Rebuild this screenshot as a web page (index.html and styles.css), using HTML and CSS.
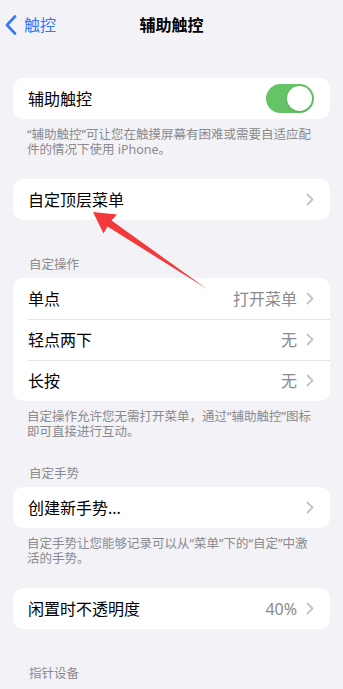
FILE: index.html
```html
<!DOCTYPE html>
<html lang="zh-CN">
<head>
<meta charset="utf-8">
<title>辅助触控</title>
<link rel="stylesheet" href="styles.css">
</head>
<body>
<div class="page">
  <header class="nav">
    <div class="back">
      <svg class="back-icon" width="12" height="20" viewBox="0 0 12 20"><path d="M10 1.5 L2 10 L10 18.5" fill="none" stroke="#3478f6" stroke-width="2.6" stroke-linecap="round" stroke-linejoin="round"/></svg>
      <span>触控</span>
    </div>
    <div class="title">辅助触控</div>
  </header>

  <section class="card first">
    <div class="row">
      <span class="label">辅助触控</span>
      <span class="toggle"><span class="knob"></span></span>
    </div>
  </section>
  <p class="caption">“辅助触控”可让您在触摸屏幕有困难或需要自适应配<br>件的情况下使用 iPhone。</p>

  <section class="card after-caption">
    <div class="row">
      <span class="label">自定顶层菜单</span>
      <span class="right"><svg class="chev" width="8" height="13" viewBox="0 0 8 13"><path d="M1.5 1.5 L6.5 6.5 L1.5 11.5" fill="none" stroke="#c4c4c8" stroke-width="1.8" stroke-linecap="round" stroke-linejoin="round"/></svg></span>
    </div>
  </section>

  <h2 class="header after-card">自定操作</h2>
  <section class="card">
    <div class="row">
      <span class="label">单点</span>
      <span class="right"><span class="value">打开菜单</span><svg class="chev" width="8" height="13" viewBox="0 0 8 13"><path d="M1.5 1.5 L6.5 6.5 L1.5 11.5" fill="none" stroke="#c4c4c8" stroke-width="1.8" stroke-linecap="round" stroke-linejoin="round"/></svg></span>
    </div>
    <div class="row sep">
      <span class="label">轻点两下</span>
      <span class="right"><span class="value">无</span><svg class="chev" width="8" height="13" viewBox="0 0 8 13"><path d="M1.5 1.5 L6.5 6.5 L1.5 11.5" fill="none" stroke="#c4c4c8" stroke-width="1.8" stroke-linecap="round" stroke-linejoin="round"/></svg></span>
    </div>
    <div class="row sep">
      <span class="label">长按</span>
      <span class="right"><span class="value">无</span><svg class="chev" width="8" height="13" viewBox="0 0 8 13"><path d="M1.5 1.5 L6.5 6.5 L1.5 11.5" fill="none" stroke="#c4c4c8" stroke-width="1.8" stroke-linecap="round" stroke-linejoin="round"/></svg></span>
    </div>
  </section>
  <p class="caption">自定操作允许您无需打开菜单，通过“辅助触控”图标<br>即可直接进行互动。</p>

  <h2 class="header after-caption-h">自定手势</h2>
  <section class="card">
    <div class="row">
      <span class="label">创建新手势...</span>
      <span class="right"><svg class="chev" width="8" height="13" viewBox="0 0 8 13"><path d="M1.5 1.5 L6.5 6.5 L1.5 11.5" fill="none" stroke="#c4c4c8" stroke-width="1.8" stroke-linecap="round" stroke-linejoin="round"/></svg></span>
    </div>
  </section>
  <p class="caption">自定手势让您能够记录可以从“菜单”下的“自定”中激<br>活的手势。</p>

  <section class="card after-caption">
    <div class="row">
      <span class="label">闲置时不透明度</span>
      <span class="right"><span class="value">40%</span><svg class="chev" width="8" height="13" viewBox="0 0 8 13"><path d="M1.5 1.5 L6.5 6.5 L1.5 11.5" fill="none" stroke="#c4c4c8" stroke-width="1.8" stroke-linecap="round" stroke-linejoin="round"/></svg></span>
    </div>
  </section>

  <h2 class="header after-card">指针设备</h2>

  <svg class="arrow" width="343" height="689" viewBox="0 0 343 689">
    <polygon points="93,212 117,214.5 111.5,220.5 207,289 107.5,226.5 103.5,233.5" fill="#f23a3a"/>
  </svg>
</div>
</body>
</html>
```

FILE: styles.css
```css
* { box-sizing: border-box; }

html, body {
  margin: 0;
  padding: 0;
  background: #f2f2f7;
}

body {
  font-family: "Noto Sans", "Noto Sans CJK SC", sans-serif;
  color: #000;
  width: 343px;
  height: 689px;
  overflow: hidden;
}

.page {
  position: relative;
  display: flex;
  flex-direction: column;
  padding: 0 13px;
  height: 689px;
}

.page > * { flex-shrink: 0; }

.nav {
  position: relative;
  height: 50px;
  display: flex;
  align-items: center;
  justify-content: center;
  margin: 0 -13px;
}

.back {
  position: absolute;
  left: 5px;
  top: 15px;
  display: flex;
  align-items: center;
  gap: 7px;
  color: #3478f6;
  font-size: 16px;
  line-height: 20px;
}

.back-icon { display: block; }

.title {
  font-size: 16px;
  font-weight: 700;
  line-height: 20px;
}

.card {
  background: #fff;
  border-radius: 10px;
  overflow: hidden;
}

.card.first { margin-top: 28px; }
.card.after-caption { margin-top: 22px; }

.row {
  height: 41px;
  display: flex;
  align-items: center;
  justify-content: space-between;
  padding: 0 16px 0 15px;
  position: relative;
}

.row.sep::before {
  content: "";
  position: absolute;
  left: 15px;
  right: 0;
  top: 0;
  height: 1px;
  background: #e4e4e8;
}

.label {
  font-size: 16px;
  line-height: 20px;
}

.right {
  display: flex;
  align-items: center;
  gap: 9px;
}

.value {
  font-size: 16px;
  line-height: 20px;
  color: #8a8a8e;
}

.chev { display: block; }

.toggle {
  width: 48px;
  height: 29px;
  border-radius: 15px;
  background: #65c466;
  position: relative;
}

.knob {
  position: absolute;
  right: 2px;
  top: 2px;
  width: 25px;
  height: 25px;
  border-radius: 50%;
  background: #fff;
  box-shadow: 0 1px 3px rgba(0,0,0,0.15);
}

.caption {
  margin: 0;
  padding: 8px 14px 0 14px;
  font-size: 12.5px;
  line-height: 15px;
  color: #8a8a8e;
}

.header {
  margin: 0;
  padding: 0 16px 6px 16px;
  font-size: 12.5px;
  line-height: 15px;
  font-weight: 400;
  color: #8a8a8e;
}

.header.after-card { margin-top: 37px; }
.header.after-caption-h { margin-top: 27px; }

.arrow {
  position: absolute;
  left: 0;
  top: 0;
  pointer-events: none;
}
```
